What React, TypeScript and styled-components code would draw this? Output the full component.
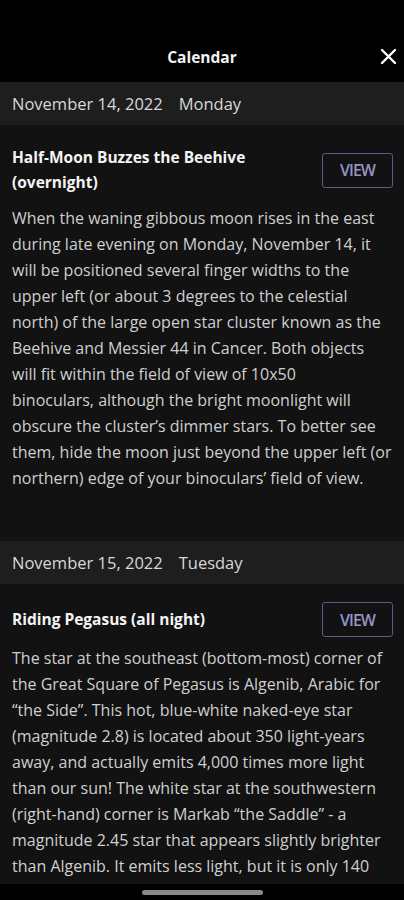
import React from "react";
import styled, { createGlobalStyle } from "styled-components";

const events = [
  {
    date: "November 14, 2022",
    day: "Monday",
    title: ["Half-Moon Buzzes the Beehive", "(overnight)"],
    body: [
      "When the waning gibbous moon rises in the east",
      "during late evening on Monday, November 14, it",
      "will be positioned several finger widths to the",
      "upper left (or about 3 degrees to the celestial",
      "north) of the large open star cluster known as the",
      "Beehive and Messier 44 in Cancer. Both objects",
      "will fit within the field of view of 10x50",
      "binoculars, although the bright moonlight will",
      "obscure the cluster\u2019s dimmer stars. To better see",
      "them, hide the moon just beyond the upper left (or",
      "northern) edge of your binoculars\u2019 field of view.",
    ],
  },
  {
    date: "November 15, 2022",
    day: "Tuesday",
    title: ["Riding Pegasus (all night)"],
    body: [
      "The star at the southeast (bottom-most) corner of",
      "the Great Square of Pegasus is Algenib, Arabic for",
      "\u201cthe Side\u201d. This hot, blue-white naked-eye star",
      "(magnitude 2.8) is located about 350 light-years",
      "away, and actually emits 4,000 times more light",
      "than our sun! The white star at the southwestern",
      "(right-hand) corner is Markab \u201cthe Saddle\u201d - a",
      "magnitude 2.45 star that appears slightly brighter",
      "than Algenib. It emits less light, but it is only 140",
      "light-years away. The magnitude 2.4 star at the",
      "northwestern corner is Scheat, a red giant star.",
    ],
  },
];

export default function App() {
  return (
    <>
      <GlobalStyle />
      <Screen>
        <Header>
          <HeaderTitle>Calendar</HeaderTitle>
          <CloseButton aria-label="Close">
            <svg width="17" height="17" viewBox="0 0 17 17">
              <path d="M2 2L15 15M15 2L2 15" stroke="#fff" strokeWidth="2.4" strokeLinecap="round" />
            </svg>
          </CloseButton>
        </Header>

        <List>
          {events.map((e) => (
            <Section key={e.date}>
              <DateBar>
                {e.date}
                <Day>{e.day}</Day>
              </DateBar>
              <Event>
                <EventHead>
                  <EventTitle>
                    {e.title.map((t) => (
                      <Line key={t}>{t}</Line>
                    ))}
                  </EventTitle>
                  <ViewButton>VIEW</ViewButton>
                </EventHead>
                <Body>
                  {e.body.map((l) => (
                    <Line key={l}>{l}</Line>
                  ))}
                </Body>
              </Event>
            </Section>
          ))}
        </List>

        <HomeBar>
          <Indicator />
        </HomeBar>
      </Screen>
    </>
  );
}

const GlobalStyle = createGlobalStyle`
    html, body {
        margin: 0;
        padding: 0;
        background: #000;
    }
    * {
        box-sizing: border-box;
    }
`;

const Screen = styled.div`
    position: relative;
    width: 404px;
    height: 900px;
    overflow: hidden;
    background: #121212;
    font-family: "Open Sans", "Noto Sans", sans-serif;
    display: flex;
    flex-direction: column;
`;

const Header = styled.div`
    position: relative;
    height: 82px;
    flex-shrink: 0;
    background: #000;
    display: flex;
    align-items: flex-end;
    justify-content: center;
    padding-bottom: 14px;
`;

const HeaderTitle = styled.div`
    font-size: 15.5px;
    font-weight: 700;
    color: #f2f2f2;
`;

const CloseButton = styled.div`
    position: absolute;
    right: 7px;
    bottom: 17px;
    width: 17px;
    height: 17px;
    display: flex;
`;

const List = styled.div`
    flex: 1;
    overflow: hidden;
`;

const Section = styled.div`
    padding-bottom: 50px;
`;

const DateBar = styled.div`
    height: 43px;
    background: #1e1e1e;
    padding: 0 12px;
    display: flex;
    align-items: center;
    font-size: 16.5px;
    color: #d8d8d8;
    white-space: nowrap;
`;

const Day = styled.span`
    margin-left: 16px;
`;

const Event = styled.div`
    padding: 18px 12px 0;
`;

const EventHead = styled.div`
    display: flex;
    align-items: center;
    justify-content: space-between;
    gap: 12px;
`;

const EventTitle = styled.div`
    padding: 2px 0;
    font-size: 15.5px;
    font-weight: 700;
    line-height: 25px;
    color: #f4f4f4;
`;

const Line = styled.span`
    display: block;
    white-space: nowrap;
`;

const ViewButton = styled.div`
    flex-shrink: 0;
    width: 71px;
    height: 35px;
    margin-right: -1px;
    border: 1.5px solid #5b5b86;
    border-radius: 3px;
    display: flex;
    align-items: center;
    justify-content: center;
    font-size: 16px;
    font-weight: 600;
    letter-spacing: -1px;
    color: #9494c6;
`;

const Body = styled.p`
    margin: 8px 0 0;
    font-size: 16px;
    line-height: 26px;
    color: #cfcfcf;
`;

const HomeBar = styled.div`
    position: absolute;
    left: 0;
    right: 0;
    bottom: 0;
    height: 16px;
    background: #000;
    display: flex;
    justify-content: center;
    padding-top: 6px;
`;

const Indicator = styled.div`
    width: 121px;
    height: 5px;
    border-radius: 3px;
    background: #8a8a8a;
`;
